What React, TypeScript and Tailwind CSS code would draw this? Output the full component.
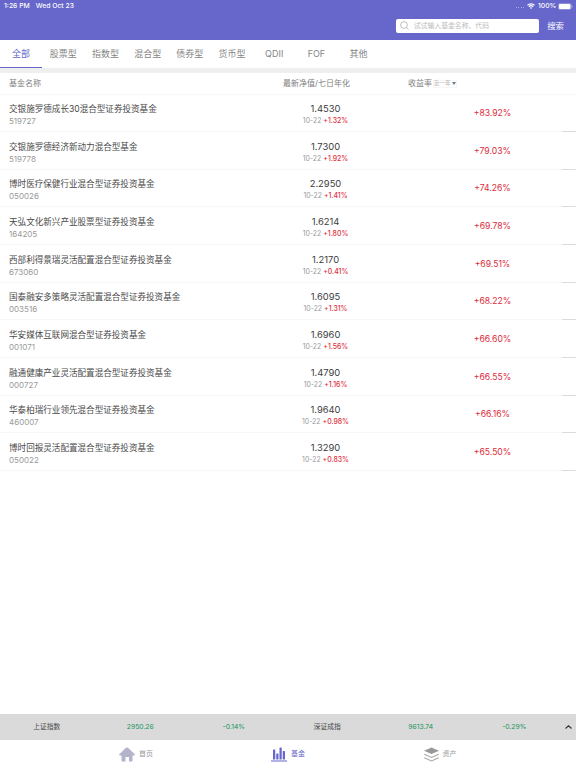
import React from "react";

interface Fund {
  name: string;
  code: string;
  value: string;
  change: string;
  rate: string;
}

const TABS = ["全部", "股票型", "指数型", "混合型", "债券型", "货币型", "QDII", "FOF", "其他"];

const FUNDS: Fund[] = [
  { name: "交银施罗德成长30混合型证券投资基金", code: "519727", value: "1.4530", change: "+1.32%", rate: "+83.92%" },
  { name: "交银施罗德经济新动力混合型基金", code: "519778", value: "1.7300", change: "+1.92%", rate: "+79.03%" },
  { name: "博时医疗保健行业混合型证券投资基金", code: "050026", value: "2.2950", change: "+1.41%", rate: "+74.26%" },
  { name: "天弘文化新兴产业股票型证券投资基金", code: "164205", value: "1.6214", change: "+1.80%", rate: "+69.78%" },
  { name: "西部利得景瑞灵活配置混合型证券投资基金", code: "673060", value: "1.2170", change: "+0.41%", rate: "+69.51%" },
  { name: "国泰融安多策略灵活配置混合型证券投资基金", code: "003516", value: "1.6095", change: "+1.31%", rate: "+68.22%" },
  { name: "华安媒体互联网混合型证券投资基金", code: "001071", value: "1.6960", change: "+1.56%", rate: "+66.60%" },
  { name: "融通健康产业灵活配置混合型证券投资基金", code: "000727", value: "1.4790", change: "+1.16%", rate: "+66.55%" },
  { name: "华泰柏瑞行业领先混合型证券投资基金", code: "460007", value: "1.9640", change: "+0.98%", rate: "+66.16%" },
  { name: "博时回报灵活配置混合型证券投资基金", code: "050022", value: "1.3290", change: "+0.83%", rate: "+65.50%" },
];

const INDEXES = [
  { name: "上证指数", value: "2950.26", change: "-0.14%" },
  { name: "深证成指", value: "9613.74", change: "-0.29%" },
];

const StatusBar: React.FC = () => (
  <div className="flex h-3 items-center justify-between pr-[3px] pl-1 text-[6.8px] leading-none font-medium text-white">
    <div className="flex gap-[6px]">
      <span>1:26 PM</span>
      <span>Wed Oct 23</span>
    </div>
    <div className="flex items-center">
      <div className="mt-[3px] mr-[3px] flex gap-[1.5px]">
        <i className="size-[1px] rounded-full bg-white/60" />
        <i className="size-[1px] rounded-full bg-white/60" />
        <i className="size-[1px] rounded-full bg-white/60" />
        <i className="size-[1px] rounded-full bg-white/60" />
      </div>
      <svg className="mr-[3px] h-[6px] w-[8px]" viewBox="0 0 16 12" fill="none" stroke="white" strokeWidth="2.4">
        <path d="M1 4.6a10 10 0 0 1 14 0M3.7 7.4a6.2 6.2 0 0 1 8.6 0" />
        <path d="M8 11.8 5.6 9.4a3.5 3.5 0 0 1 4.8 0z" fill="white" stroke="none" />
      </svg>
      <span className="w-[18px]">100%</span>
      <svg className="ml-[2px] h-[7px] w-[15px]" viewBox="0 0 30 14">
        <rect x="0.75" y="0.75" width="25.5" height="12.5" rx="3.5" fill="none" stroke="white" strokeOpacity="0.6" />
        <rect x="2" y="2" width="23" height="10" rx="2" fill="white" />
        <path d="M27.5 4.5c2 .8 2 4.2 0 5z" fill="white" fillOpacity="0.6" />
      </svg>
    </div>
  </div>
);

const Header: React.FC = () => (
  <header className="h-[39.5px] shrink-0 bg-[#6666cb]">
    <StatusBar />
    <div className="flex items-center justify-end pt-[6.5px] pr-[12px]">
      <div className="flex h-[14.5px] w-[143.5px] items-center rounded-[2px] bg-white pl-1">
        <svg className="size-[9px]" viewBox="0 0 18 18" fill="none" stroke="#a3a3a3" strokeWidth="1.4">
          <circle cx="8" cy="8" r="6.8" />
          <path d="m13 13 4 4" />
        </svg>
        <span className="ml-[5px] pt-[2px] text-[6.85px] leading-none text-[#bcbcbc]">试试输入基金名称、代码</span>
      </div>
      <span className="ml-2 text-[8.4px] leading-none text-white">搜索</span>
    </div>
  </header>
);

const FundRow: React.FC<{ fund: Fund }> = ({ fund }) => (
  <div className="relative flex h-[37.65px] items-center border-b border-[#f8f8f8]">
    <div className="w-[241px] pt-[4.5px] pl-[9px]">
      <div className="text-[8.57px] leading-[12px] whitespace-nowrap text-[#4a4a4a]">{fund.name}</div>
      <div className="text-[8px] leading-[12px] text-[#999]">{fund.code}</div>
    </div>
    <div className="w-[168px] pt-[4.5px] pl-px text-center">
      <div className="text-[9.4px] leading-[12px] text-[#3c3c3c]">{fund.value}</div>
      <div className="flex justify-center gap-[2px] text-[6.9px] leading-[12px] text-[#999]">
        <span>10-22</span>
        <span className="font-medium text-[#df2f40]">{fund.change}</span>
      </div>
    </div>
    <div className="w-[167px] pt-[1.5px] text-center text-[8.6px] text-[#dc2b3c]">{fund.rate}</div>
    <i className="absolute right-0 -bottom-px h-px w-[14.5px] bg-[#dcdcdc]" />
  </div>
);

const App: React.FC = () => {
  return (
    <div className="flex h-screen w-full flex-col overflow-hidden bg-white font-['Inter','Noto_Sans_CJK_SC',sans-serif]">
      <Header />

      <nav className="flex h-[28px] shrink-0 text-[9px] text-[#858585]">
        {TABS.map((tab, i) => (
          <div
            key={tab}
            className={
              i === 0
                ? "flex w-[42.2px] items-center justify-center border-b border-[#6666cb] pt-[2px] text-[#6666cb]"
                : "flex w-[42.2px] items-center justify-center border-b border-transparent pt-[2px]"
            }
          >
            {tab}
          </div>
        ))}
      </nav>
      <div className="h-[5px] shrink-0 bg-[#efefef]" />

      <main className="flex-1">
        <div className="flex h-[22px] items-center border-b border-[#f8f8f8] text-[8px] text-[#808080]">
          <span className="w-[274px] pl-[9px]">基金名称</span>
          <span className="w-[85px] text-center">最新净值/七日年化</span>
          <span className="ml-[49px]">收益率</span>
          <span className="mt-px ml-[1px] flex h-[8px] items-center gap-[1px] border border-[#f6f6f6] text-[5.5px] leading-none text-[#b0b0b0]">
            <span className="pt-px">近一年</span>
            <svg className="mb-px h-[3px] w-[4px]" viewBox="0 0 8 6">
              <path d="M0 0h8L4 6z" fill="#777" />
            </svg>
          </span>
        </div>
        {FUNDS.map((fund) => (
          <FundRow key={fund.code} fund={fund} />
        ))}
      </main>

      <div className="flex h-[26px] shrink-0 items-center bg-[#dadada] text-[6.8px]">
        {INDEXES.map((item) => (
          <div key={item.name} className="flex w-[280.5px] text-center text-[#16965a]">
            <span className="flex-1 text-[#4a4a4a]">{item.name}</span>
            <span className="flex-1">{item.value}</span>
            <span className="flex-1">{item.change}</span>
          </div>
        ))}
        <svg className="ml-[4px] h-[4px] w-[7px]" viewBox="0 0 14 8" fill="none" stroke="#333" strokeWidth="2.2">
          <path d="m1 7 6-5.5L13 7" />
        </svg>
      </div>

      <footer className="flex h-[28px] shrink-0 justify-center text-[7px] text-[#999]">
        <div className="flex w-[152px] items-center justify-center gap-[4px]">
          <svg className="h-[15px] w-[16px]" viewBox="0 0 32 30" fill="#b3b3cc">
            <path d="M14 1.500Q16 0 18 1.500L31 14q1.500 2.500-.5 3H27v10.500q0 1.500-1.500 1.500H20v-9h-7v9H6.500Q5 29 5 27.500V17H1.500q-2-.5-.5-3z" />
          </svg>
          首页
        </div>
        <div className="flex w-[152px] items-center justify-center gap-[4px] text-[#6666cb]">
          <svg className="h-[15px] w-[16px]" viewBox="0 0 32 30" fill="#6666cb">
            <rect x="4" y="5" width="4.500" height="20" rx="1" />
            <rect x="10.500" y="13" width="4.500" height="12" rx="1" />
            <rect x="17" y="1" width="4.500" height="24" rx="1" />
            <rect x="23.500" y="8" width="4.500" height="17" rx="1" />
            <rect x="0" y="27" width="32" height="2" />
          </svg>
          基金
        </div>
        <div className="flex w-[152px] items-center justify-center gap-[4px]">
          <svg className="h-[15px] w-[15px]" viewBox="0 0 30 30" fill="none" stroke="#a8a8a8" strokeWidth="2.2">
            <path d="M15 1 0 7.500 15 14l15-6.500z" fill="#999" stroke="none" />
            <path d="m.5 14.500 14.500 6.500 14.500-6.500M.5 21.500 15 28l14.500-6.500" />
          </svg>
          资产
        </div>
      </footer>
    </div>
  );
};

export default App;
